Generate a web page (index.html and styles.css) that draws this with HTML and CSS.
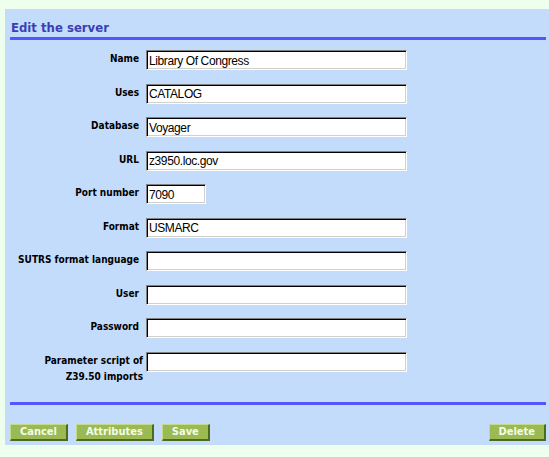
FILE: index.html
```html
<!DOCTYPE html>
<html>
<head>
<meta charset="utf-8">
<link rel="stylesheet" href="styles.css">
</head>
<body>
<div class="panel">
  <h1 class="title">Edit the server</h1>
  <div class="rule"></div>
  <form class="form">
    <label class="lbl">Name</label><input class="field" type="text" value="Library Of Congress">
    <label class="lbl">Uses</label><input class="field" type="text" value="CATALOG">
    <label class="lbl">Database</label><input class="field" type="text" value="Voyager">
    <label class="lbl">URL</label><input class="field" type="text" value="z3950.loc.gov">
    <label class="lbl">Port number</label><input class="field short" type="text" value="7090">
    <label class="lbl">Format</label><input class="field" type="text" value="USMARC">
    <label class="lbl">SUTRS format language</label><input class="field" type="text" value="">
    <label class="lbl">User</label><input class="field" type="text" value="">
    <label class="lbl">Password</label><input class="field" type="password" value="">
    <label class="lbl two">Parameter script of<br>Z39.50 imports</label><input class="field" type="text" value="">
  </form>
  <div class="rule rule-bottom"></div>
  <div class="actions">
    <div class="left">
      <button class="btn" type="button">Cancel</button>
      <button class="btn" type="button">Attributes</button>
      <button class="btn" type="button">Save</button>
    </div>
    <button class="btn" type="button">Delete</button>
  </div>
</div>
</body>
</html>
```
FILE: styles.css
```css
html, body {
  margin: 0;
  padding: 0;
  background: #eeffee;
}
body {
  padding: 9px 0 0 5px;
  font-family: "DejaVu Sans Condensed", "DejaVu Sans", sans-serif;
}
.panel {
  background: #c4dcfc;
  height: 436px;
  padding: 0 3px 0 5px;
  box-sizing: border-box;
}
.title {
  margin: 0;
  padding: 11px 0 0 1px;
  height: 28px;
  box-sizing: border-box;
  font-family: "DejaVu Sans Condensed", "DejaVu Sans", sans-serif;
  font-size: 13px;
  line-height: 16px;
  font-weight: bold;
  color: #3a3fb4;
}
.rule {
  height: 3px;
  background: #5555ff;
}
.form {
  margin: 10px 0 0 0;
  display: grid;
  grid-template-columns: 129px 262px;
  column-gap: 7px;
  row-gap: 13.5px;
  align-items: start;
}
.lbl {
  text-align: right;
  font-family: "DejaVu Sans Condensed", "DejaVu Sans", sans-serif;
  font-size: 10px;
  line-height: 16px;
  font-weight: bold;
  color: #000;
  padding-top: 1px;
  white-space: nowrap;
}
.lbl.two {
  margin-right: -4px;
}
.field {
  width: 261px;
  height: 20px;
  box-sizing: border-box;
  margin: 0;
  padding: 1px 2px 0;
  border: 1px solid;
  border-color: #808080 #ffffff #ffffff #808080;
  box-shadow: inset 1px 1px 0 #000, inset -1px -1px 0 #d4d0c8;
  background: #fff;
  font-family: "Liberation Sans", Arial, sans-serif;
  font-size: 12px;
  letter-spacing: -0.4px;
  color: #000;
  outline: none;
}
.field.short {
  width: 60px;
}
.rule-bottom {
  margin-top: 17px;
}
.actions {
  margin-top: 19px;
  display: flex;
  justify-content: space-between;
}
.left {
  display: flex;
  gap: 8px;
}
.btn {
  height: 17px;
  margin: 0;
  padding: 0 9px;
  background: #9aba54;
  border-style: solid;
  border-width: 1px 2px 2px 1px;
  border-color: #c4d890 #4e6a20 #4e6a20 #c4d890;
  color: #f4fbe8;
  font-family: "DejaVu Sans Condensed", "DejaVu Sans", sans-serif;
  font-size: 11px;
  font-weight: bold;
  line-height: 13px;
}
```
